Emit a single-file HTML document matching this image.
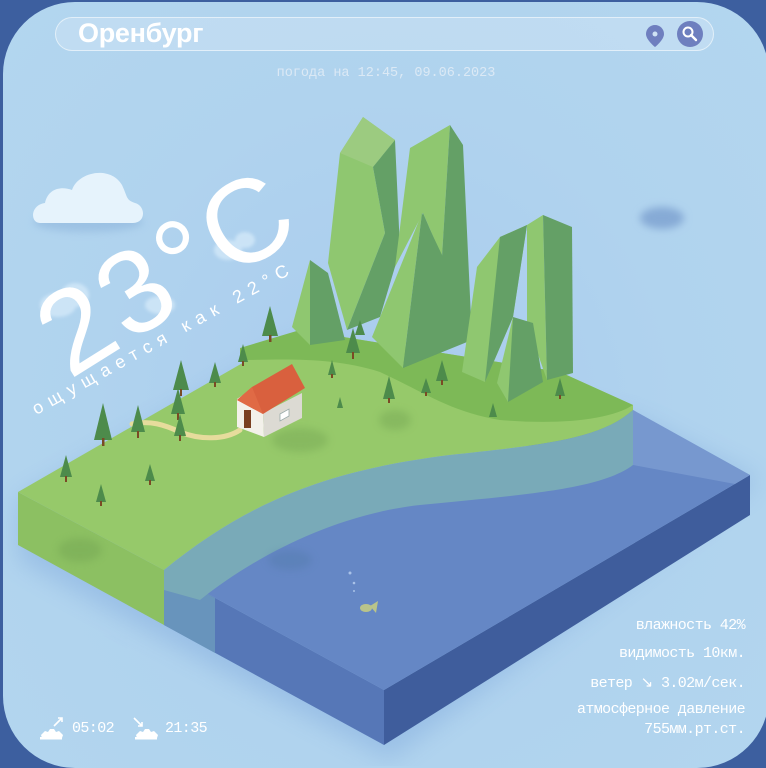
<!DOCTYPE html>
<html><head><meta charset="utf-8"><style>
html,body{margin:0;padding:0;width:766px;height:766px;overflow:hidden;background:#3d5f9f}
.card{position:absolute;left:3px;top:2px;width:766px;height:766px;border-radius:72px;background:radial-gradient(ellipse at 50% 55%,#a9cbee 0%,#b0d3ee 55%,#b3d6ef 100%);overflow:hidden}
svg{position:absolute;left:-3px;top:-2px}
.search{position:absolute;left:52px;top:15px;width:657px;height:32px;border-radius:17px;background:rgba(255,255,255,0.18);border:1px solid rgba(255,255,255,0.55)}
.city{position:absolute;left:75px;top:16px;font:bold 27px "Liberation Sans",sans-serif;color:#fff;letter-spacing:-0.3px}
.date{position:absolute;left:0;width:766px;top:64px;text-align:center;font:13.5px "Liberation Mono",monospace;color:#dbe9f5}
.info{position:absolute;right:24px;text-align:right;font:15px "Liberation Mono",monospace;color:#fff;letter-spacing:-0.6px}
.sun{position:absolute;top:718px;font:15px "Liberation Mono",monospace;color:#fff;letter-spacing:-0.6px}
.big{position:absolute;left:14px;top:294px;transform-origin:0 0;transform:rotate(-32deg);font:118px "Liberation Sans",sans-serif;color:#fff;white-space:nowrap;line-height:1;letter-spacing:4px}
.feel{position:absolute;left:26px;top:400px;transform-origin:0 0;transform:rotate(-29deg);font:18px "Liberation Sans",sans-serif;color:#fff;letter-spacing:7px;white-space:nowrap;line-height:1}
</style></head><body>
<div class="card">
<svg width="766" height="766" viewBox="0 0 766 766">
<defs>
<filter id="bl" x="-50%" y="-50%" width="200%" height="200%"><feGaussianBlur stdDeviation="12"/></filter>
<filter id="bl2" x="-50%" y="-50%" width="200%" height="200%"><feGaussianBlur stdDeviation="4"/></filter>
<filter id="bl3" x="-50%" y="-50%" width="200%" height="200%"><feGaussianBlur stdDeviation="1.5"/></filter>
</defs>
<polygon points="18,500 300,340 640,420 760,480 390,760 164,640 18,560" fill="#7fa8dc" opacity="0.45" filter="url(#bl)"/>
<ellipse cx="662" cy="218" rx="22" ry="11" fill="#86aad6" filter="url(#bl2)"/>
<polygon points="18,492 164,570 164,625 18,545" fill="#8cc062"/>
<polygon points="164,570 384,690 384,745 164,625" fill="#5677b7"/>
<polygon points="164,570 215,598 215,653 164,625" fill="#6d9bbd" opacity="0.8"/>
<polygon points="384,690 750,475 750,515 384,745" fill="#3f5d9c"/>
<polygon points="164,570 384,690 750,475 633,410" fill="#6587c5"/>
<polygon points="633,410 750,475 735,484 633,465" fill="#8eaedb" opacity="0.45"/>
<path d="M18,492 L300,330 L560,372 L633,405 L633,410 C600,440 540,445 450,455 C330,470 250,500 164,570 Z" fill="#96c96a"/>
<path d="M240,348 L300,330 L560,372 L633,405 C610,420 560,425 500,420 C450,412 420,390 380,372 C330,356 280,360 240,360 Z" fill="#7db957"/>
<path d="M164,570 C250,500 330,470 450,455 C540,445 600,440 633,410 L633,465 C600,490 520,495 420,505 C330,515 250,560 200,600 L164,590 Z" fill="#79aab8"/>
<g fill="#6c9c4e" opacity="0.35" filter="url(#bl2)">
<ellipse cx="300" cy="440" rx="28" ry="12"/><ellipse cx="395" cy="420" rx="16" ry="10"/>
<ellipse cx="80" cy="550" rx="22" ry="12"/><ellipse cx="290" cy="560" rx="22" ry="10" fill="#4e78a5"/>
</g>
<path d="M132,424 C150,420 165,425 180,432 C200,440 225,440 240,430" stroke="#e6dc9c" stroke-width="5" fill="none" stroke-linecap="round"/>
<g>
<polygon points="310,260 292,327 310,345" fill="#8fc770"/>
<polygon points="310,260 328,273 345,340 310,345" fill="#64a066"/>
<polygon points="340,153 363,117 395,140 373,167 385,233 347,330 328,263" fill="#8fc770"/>
<polygon points="363,117 395,140 373,167 340,153" fill="#9ccb80"/>
<polygon points="395,140 400,250 380,317 347,330 385,233 373,167" fill="#64a066"/>
<polygon points="410,148 450,125 442,257 423,213 395,267" fill="#8fc770"/>
<polygon points="450,125 463,145 472,340 403,368 423,213 442,257" fill="#64a066"/>
<polygon points="422,213 372,337 403,368" fill="#8fc770"/>
<polygon points="422,213 443,257 467,340 403,368" fill="#64a066"/>
<polygon points="500,237 477,267 462,372 485,382 513,317 527,225" fill="#8fc770"/>
<polygon points="500,237 527,225 513,317 485,382" fill="#64a066"/>
<polygon points="527,225 543,215 547,380 527,323" fill="#8fc770"/>
<polygon points="543,215 572,227 573,373 547,380" fill="#64a066"/>
<polygon points="513,317 497,383 508,402 520,343" fill="#8fc770"/>
<polygon points="513,317 533,323 543,382 508,402" fill="#64a066"/>
</g>
<g fill="#4d8b4b">
<polygon points="103,403 94,440 112,440"/><rect x="102" y="438" width="2.5" height="8" fill="#7a4a25"/>
<polygon points="138,405 131,432 145,432"/><rect x="137" y="431" width="2" height="7" fill="#7a4a25"/>
<polygon points="181,360 173,390 189,390"/><rect x="180" y="389" width="2" height="7" fill="#7a4a25"/>
<polygon points="178,388 171,414 185,414"/><rect x="177" y="413" width="2" height="7" fill="#7a4a25"/>
<polygon points="180,414 174,436 186,436"/><rect x="179" y="435" width="2" height="6" fill="#7a4a25"/>
<polygon points="215,362 209,383 221,383"/><rect x="214" y="382" width="2" height="5" fill="#7a4a25"/>
<polygon points="243,344 238,362 248,362"/><rect x="242" y="361" width="2" height="5" fill="#7a4a25"/>
<polygon points="270,306 262,336 278,336"/><rect x="269" y="335" width="2.5" height="7" fill="#7a4a25"/>
<polygon points="66,455 60,477 72,477"/><rect x="65" y="476" width="2" height="6" fill="#7a4a25"/>
<polygon points="101,484 96,502 106,502"/><rect x="100" y="501" width="2" height="5" fill="#7a4a25"/>
<polygon points="150,464 145,481 155,481"/><rect x="149" y="480" width="2" height="5" fill="#7a4a25"/>
<polygon points="353,328 346,353 360,353"/><rect x="352" y="352" width="2" height="7" fill="#7a4a25"/>
<polygon points="332,360 328,375 336,375"/><rect x="331" y="374" width="2" height="4" fill="#7a4a25"/>
<polygon points="389,376 383,399 395,399"/><rect x="388" y="398" width="2" height="5" fill="#7a4a25"/>
<polygon points="442,360 436,381 448,381"/><rect x="441" y="380" width="2" height="5" fill="#7a4a25"/>
<polygon points="426,378 421,393 431,393"/><rect x="425" y="392" width="2" height="4" fill="#7a4a25"/>
<polygon points="340,397 337,408 343,408"/>
<polygon points="560,378 555,396 565,396"/><rect x="559" y="395" width="2" height="4" fill="#7a4a25"/>
<polygon points="493,403 489,417 497,417"/>
<polygon points="360,320 355,335 365,335"/>
</g>
<polygon points="237,399 252,389 263,413 264,437 237,427" fill="#f3f1ea"/>
<polygon points="263,413 302,393 302,418 264,437" fill="#dcdad3"/>
<polygon points="237,400 252,387 292,364 305,388 263,414" fill="#d9603e"/>
<polygon points="237,400 252,387 263,414" fill="#e06a45"/>
<rect x="244" y="410" width="7" height="18" fill="#7a3f20"/>
<polygon points="280,414 289,409 289,416 280,421" fill="#fff" stroke="#9aa" stroke-width="0.8"/>
<g fill="#b9c48a"><ellipse cx="366" cy="608" rx="6" ry="4"/><polygon points="370,606 378,601 376,613"/></g>
<g fill="#a9c2e8"><circle cx="350" cy="573" r="1.5"/><circle cx="354" cy="583" r="1.3"/><circle cx="354" cy="591" r="1"/></g>
<ellipse cx="88" cy="222" rx="55" ry="10" fill="#8fb5dc" opacity="0.6" filter="url(#bl2)"/>
<g fill="#e6f3fc">
<path d="M40,223 C30,223 30,205 45,203 C48,188 62,186 72,190 C78,172 110,165 122,185 C128,198 126,200 135,203 C146,206 146,223 133,223 Z" />
</g>
<g fill="#d5eaf9" opacity="0.75" filter="url(#bl3)">
<ellipse cx="58" cy="305" rx="18" ry="12"/><ellipse cx="75" cy="295" rx="14" ry="12"/>
<ellipse cx="160" cy="305" rx="15" ry="9"/><ellipse cx="228" cy="250" rx="14" ry="10"/><ellipse cx="245" cy="240" rx="10" ry="8"/>
</g>
</svg>
<div class="search"></div>
<div class="city">Оренбург</div>
<svg width="766" height="766" viewBox="0 0 766 766" style="pointer-events:none">
<path d="M655,25 C650,25 646,29 646,34 C646,40 655,47 655,47 C655,47 664,40 664,34 C664,29 660,25 655,25 Z" fill="#6f7fbf"/>
<circle cx="655" cy="34" r="2.5" fill="#cfe2f4"/>
<circle cx="690" cy="34" r="13" fill="#6e7fbf"/>
<circle cx="688" cy="32" r="4.5" stroke="#fff" stroke-width="2" fill="none"/>
<line x1="691" y1="35" x2="696" y2="40" stroke="#fff" stroke-width="2.4" stroke-linecap="round"/>
<g fill="#fff">
<path d="M41,735 l4,-4 l3,1 l2,-3 l4,0 l2,3 l3,-1 l4,4 l-1,3 l-20,0 Z"/><rect x="40" y="737" width="22" height="2.5"/>
<path d="M54,726 L62,718 M58,718 L62,718 L62,722" stroke="#fff" stroke-width="1.6" fill="none"/>
<path d="M136,735 l4,-4 l3,1 l2,-3 l4,0 l2,3 l3,-1 l4,4 l-1,3 l-20,0 Z"/><rect x="135" y="737" width="22" height="2.5"/>
<path d="M134,718 L142,726 M142,722 L142,726 L138,726" stroke="#fff" stroke-width="1.6" fill="none"/>
</g>
</svg>
<div class="date">погода на 12:45, 09.06.2023</div>
<div class="big">23°C</div>
<div class="feel">ощущается как 22°C</div>
<div class="info" style="top:615px">влажность 42%</div>
<div class="info" style="top:643px">видимость 10км.</div>
<div class="info" style="top:671px">ветер ↘ 3.02м/сек.</div>
<div class="info" style="top:699px">атмосферное давление</div>
<div class="info" style="top:719px">755мм.рт.ст.</div>
<div class="sun" style="left:69px">05:02</div>
<div class="sun" style="left:162px">21:35</div>
</div>
</body></html>
